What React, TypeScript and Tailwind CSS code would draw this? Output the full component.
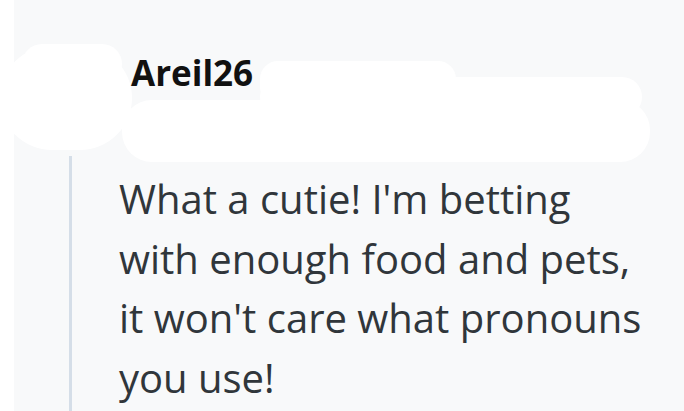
export default function App() {
  return (
    <div className="w-[684px] h-[411px] bg-white flex overflow-hidden">
      <div className="relative ml-[14px] flex-1 bg-[#f8f9fa] overflow-hidden" style={{ fontFamily: '"Open Sans", sans-serif' }}>
        {/* redaction blobs */}
        <div className="absolute left-[-14px] top-[46px] w-[132px] h-[104px] rounded-[55px] bg-white" />
        <div className="absolute left-[8px] top-[44px] w-[100px] h-[40px] rounded-[30px] bg-white" />
        <div className="absolute left-[246px] top-[61px] w-[196px] h-[44px] rounded-[18px] bg-white" />
        <div className="absolute left-[246px] top-[77px] w-[382px] h-[40px] rounded-[20px] bg-white" />
        <div className="absolute left-[108px] top-[100px] w-[528px] h-[62px] rounded-[30px] bg-white" />

        {/* header */}
        <div className="relative pt-[52px] pl-[117px] h-[142px]">
          <span className="text-[35px] leading-[42px] font-bold text-[#111]">Areil26</span>
        </div>

        {/* body */}
        <div className="ml-[55px] mt-[14px] border-l-[3px] border-[#d5dee8] pl-[47px] pt-[13px] h-[300px]">
          <p className="w-[540px] text-[40px] leading-[59.5px] text-[#30363b]">
            What a cutie! I'm betting with enough food and pets, it won't care what pronouns you use!
          </p>
        </div>
      </div>
    </div>
  )
}
